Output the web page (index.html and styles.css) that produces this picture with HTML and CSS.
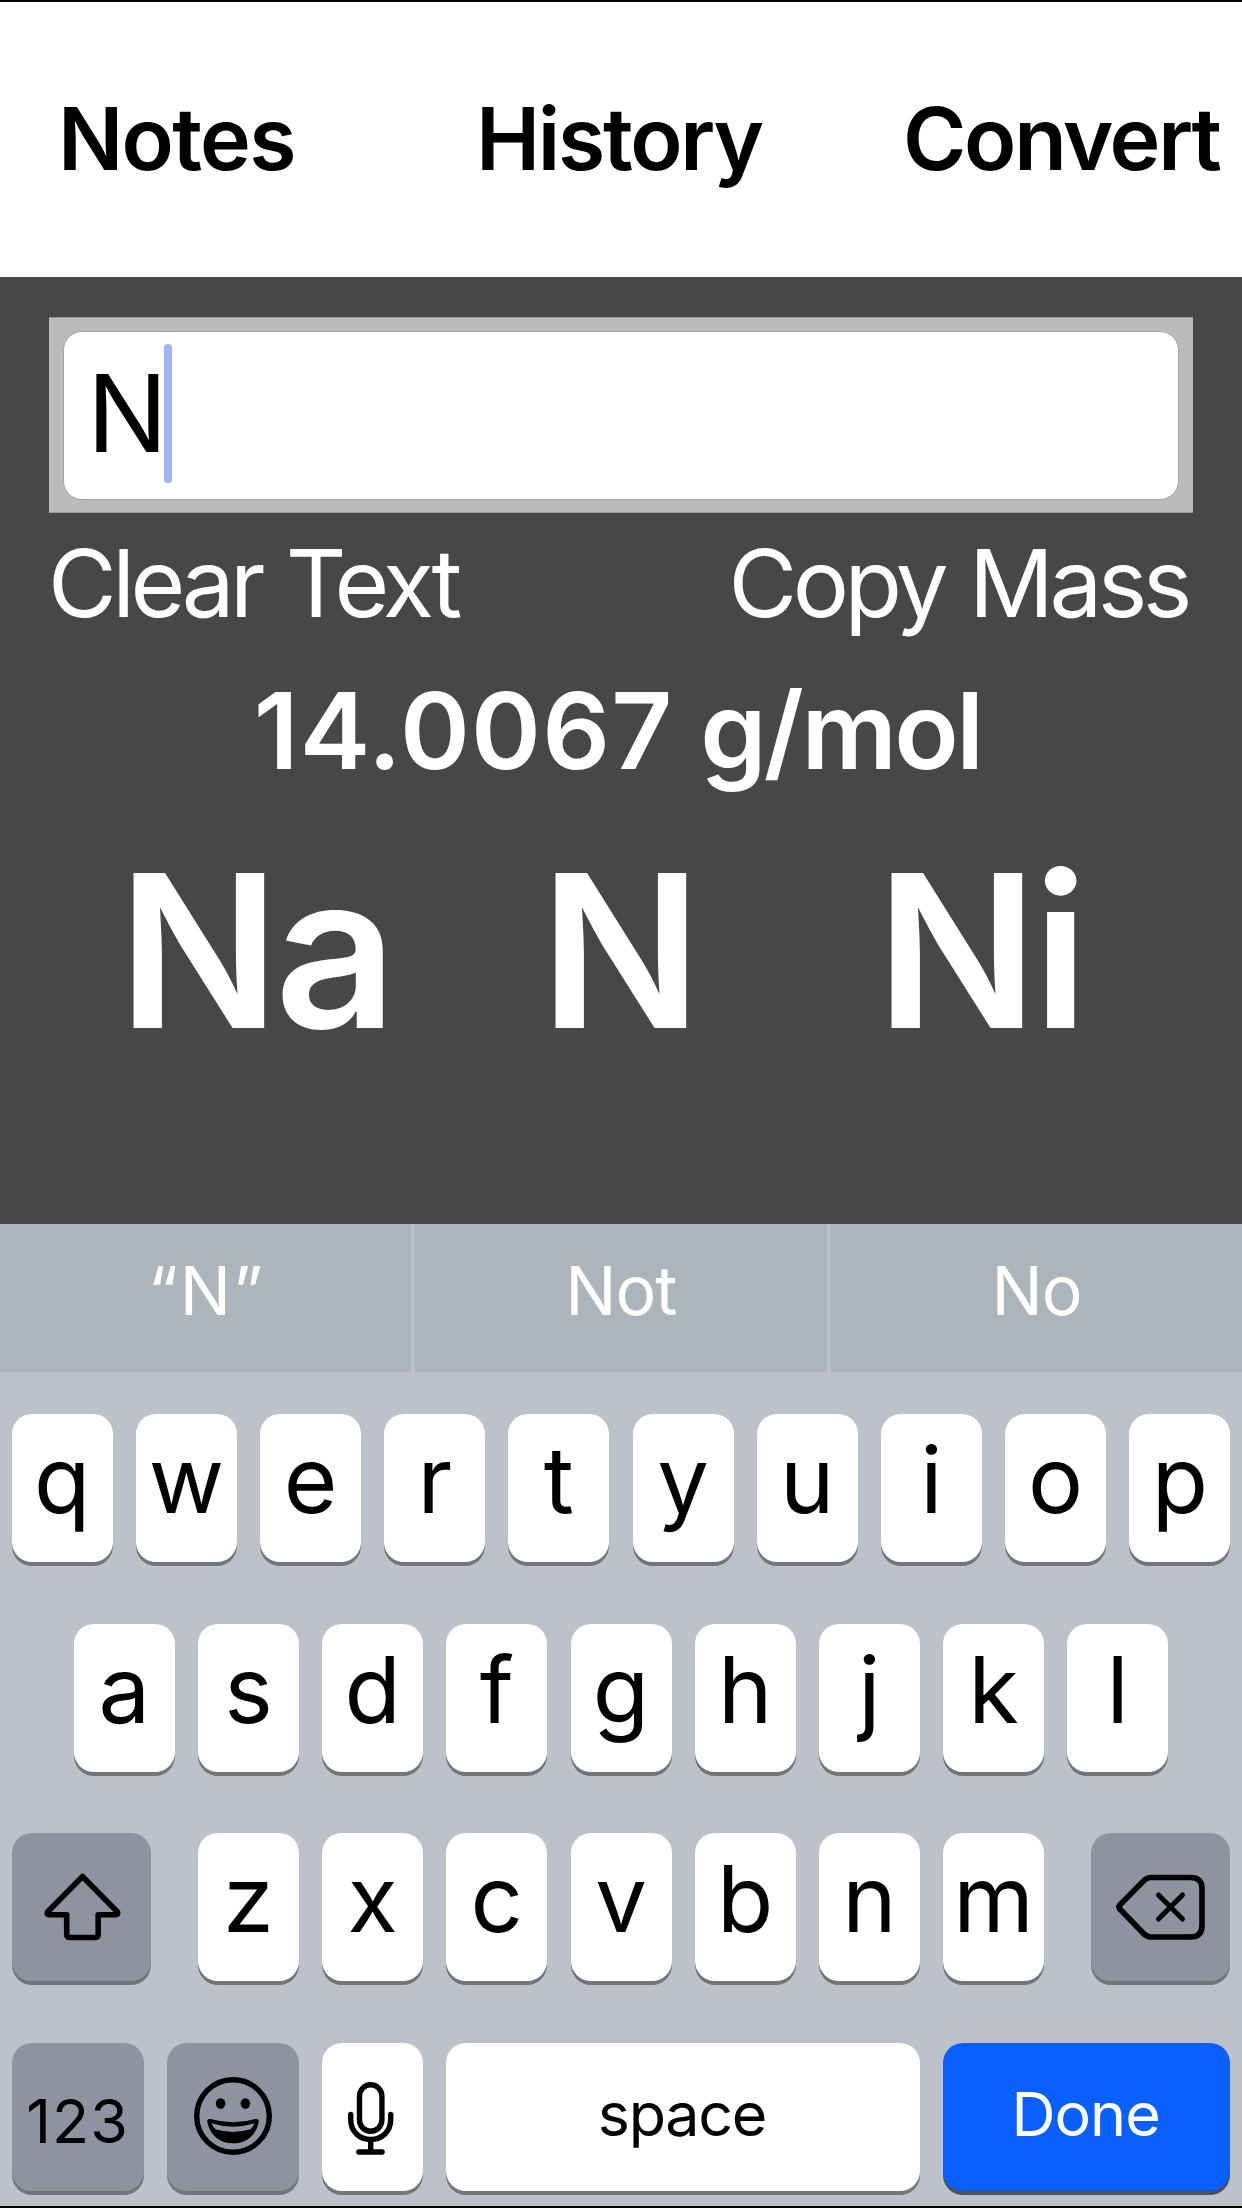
FILE: index.html
```
<!DOCTYPE html>
<html lang="en">
<head>
<meta charset="utf-8">
<title>Molar Mass</title>
<link rel="stylesheet" href="styles.css">
</head>
<body>
<div class="screen">
  <header class="nav">
    <span class="nav-notes">Notes</span>
    <span class="nav-history">History</span>
    <span class="nav-convert">Convert</span>
  </header>
  <main class="panel">
    <div class="field-frame">
      <div class="field"><span class="field-text">N</span><i class="caret"></i></div>
    </div>
    <div class="actions"><span class="clear">Clear Text</span><span class="copy">Copy Mass</span></div>
    <div class="mass"><span class="value">14.0067</span> <span class="unit">g/mol</span></div>
    <div class="elements"><span class="el-na">Na</span><span class="el-n">N</span><span class="el-ni">Ni</span></div>
  </main>
  <section class="keyboard">
    <div class="suggestions"><span class="typed">“N”</span><span>Not</span><span>No</span></div>
    <div class="rows">
      <div class="row"><b>q</b><b>w</b><b>e</b><b>r</b><b>t</b><b>y</b><b>u</b><b>i</b><b>o</b><b>p</b></div>
      <div class="row"><b>a</b><b>s</b><b>d</b><b>f</b><b>g</b><b>h</b><b>j</b><b>k</b><b>l</b></div>
      <div class="row spread">
        <b class="mod wide">
          <svg width="139" height="148" viewBox="0 0 139 148" fill="none" stroke="#000" stroke-width="5.6" stroke-linejoin="round"><path d="M70.500 43.500 L35.500 79 Q34.500 82 37.500 81.800 H54.700 V101 Q54.700 104.500 58.200 104.500 H82.700 Q86.200 104.500 86.200 101 V81.800 H103.500 Q106.500 82 105.500 79 Z"/></svg>
        </b>
        <div class="letters"><b>z</b><b>x</b><b>c</b><b>v</b><b>b</b><b>n</b><b>m</b></div>
        <b class="mod wide">
          <svg width="139" height="148" viewBox="0 0 139 148" fill="none" stroke="#000" stroke-width="5.6" stroke-linejoin="round" stroke-linecap="round"><path d="M28.6 72.2 Q27.2 74 28.6 75.8 L53 101 Q56.5 104 60 104 H99.5 Q111 104 111 92.5 V55.500 Q111 44.500 99.500 44.500 H60 Q56.500 44.500 53 47.500 Z"/><path d="M67.500 62 L91.500 86 M91.500 62 L67.500 86" stroke-width="5"/></svg>
        </b>
      </div>
      <div class="row">
        <b class="mod num">123</b>
        <b class="mod num">
          <svg width="132" height="148" viewBox="0 0 132 148"><g transform="translate(66 73)"><circle r="36.300" fill="none" stroke="#000" stroke-width="5.400"/><ellipse cx="-12.400" cy="-12.500" rx="4.800" ry="5.200"/><ellipse cx="12.400" cy="-12.500" rx="4.800" ry="5.200"/><path d="M-25.800 5.500 Q-25.800 2.500 -22.500 3 Q0 9.600 22.500 3 Q25.800 2.500 25.800 5.500 C23 20 13 27.300 0 27.300 S-23 20 -25.800 5.500 Z"/><path d="M-21.500 7.300 Q0 14.200 21.500 7.300 Q20 11 17.500 13.200 Q0 18.600 -17.500 13.200 Q-20 11 -21.500 7.300 Z" fill="#8e939f"/></g></svg>
        </b>
        <b>
          <svg width="101" height="148" viewBox="0 0 101 148" fill="none" stroke="#000" stroke-width="5.400" stroke-linecap="round"><rect x="37.500" y="41.800" width="22.400" height="46.500" rx="11.200"/><path d="M28.700 71.500 V76.500 C28.700 88.500 37.500 96.500 48.700 96.500 S68.700 88.500 68.700 76.500 V71.500 M48.700 97 V108"/><path d="M37 109 H60" stroke-width="5.600"/></svg>
        </b>
        <b class="space">space</b>
        <b class="done">Done</b>
      </div>
    </div>
  </section>
</div>
</body>
</html>
```
FILE: styles.css
```
* { box-sizing: border-box; }
body { margin: 0; font-family: Inter, "Liberation Sans", sans-serif; }
.screen {
  width: 1242px; height: 2208px; overflow: hidden;
  display: flex; flex-direction: column;
  border-top: 2px solid #000; border-bottom: 2px solid #000;
  background: #bdc2ca;
}
span, b { white-space: nowrap; }
.nav {
  height: 275px; padding: 87px 0 0 58px; background: #fff; color: #000;
  display: grid; grid-template-columns: 418px 427px auto;
  font-size: 86px; font-weight: 600; line-height: 100px; letter-spacing: -2.300px;
}
.nav-notes { letter-spacing: -1.700px; }
.panel {
  height: 947px; background: #474747; color: #fff;
  display: flex; flex-direction: column; padding: 40px 49px 0;
}
.field-frame { height: 196px; padding: 13px 14px; background: #bbb; border-top: 1px solid #999; border-bottom: 1px solid #999; }
.field {
  height: 169px; border: 1px solid #a4a4a4; border-radius: 19px; background: #fff; color: #000;
  display: flex; align-items: center; padding: 0 0 5px 23px;
}
.field-text { font-size: 107px; line-height: 118px; width: 77px; }
.caret { width: 8px; height: 139px; border-radius: 4px; background: #a3b3fa; }
.actions {
  display: flex; justify-content: space-between; margin-top: 10px; height: 120px; padding-right: 5px;
  font-size: 94px; line-height: 120px; letter-spacing: -4.500px; word-spacing: 3px;
}
.clear { margin-left: -1px; }
.mass { margin-top: 28px; padding-right: 7px; text-align: center; font-size: 106px; line-height: 119px; font-weight: 600; }
.value { letter-spacing: 1.200px; }
.unit { letter-spacing: -2.600px; }
.elements {
  display: grid; grid-template-columns: 422px 336px auto; padding-left: 69px; margin-top: 41px;
  font-size: 213px; line-height: 240px; font-weight: 560; letter-spacing: -5px;
}
.keyboard { height: 982px; }
.suggestions {
  height: 148px; background: #adb5bc; color: #fff;
  display: grid; grid-template-columns: 415px 416px 411px;
  font-size: 68px; line-height: 132px; text-align: center; letter-spacing: -1px;
}
.suggestions .typed { letter-spacing: 2px; padding-left: 2px; }
.suggestions span:not(:last-child) { border-right: 4px solid #bdc2ca; }
.rows {
  height: 834px; padding: 42px 11.600px 0;
  display: flex; flex-direction: column; gap: 61.670px;
}
.row, .letters { display: flex; justify-content: center; gap: 23.200px; }
.spread { justify-content: space-between; }
b {
  width: 101px; height: 148px; border-radius: 20px; background: #fff; color: #000;
  box-shadow: 0 4px 0 #747579;
  font-weight: 400; font-size: 92px; line-height: 132px; text-align: center;
}
b svg { display: block; }
.mod { background: #8e939f; }
.wide { width: 139px; }
.num { width: 132px; font-size: 61px; line-height: 156px; letter-spacing: 1px; }
.space { width: 473.500px; padding-right: 2px; font-size: 61px; line-height: 143px; letter-spacing: -1.300px; }
.done { width: 287.500px; padding-right: 2px; font-size: 61px; line-height: 143px; letter-spacing: -1px; background: #0a60ff; color: #fff; box-shadow: 0 4px 0 #4d5158; }
```
